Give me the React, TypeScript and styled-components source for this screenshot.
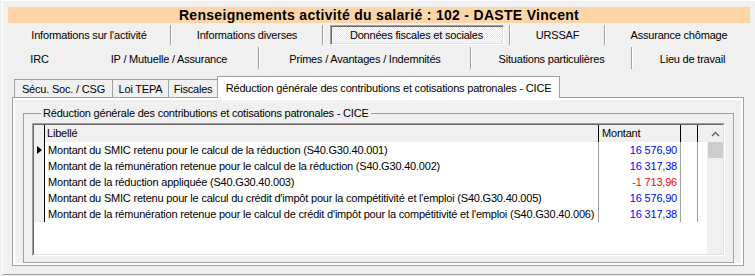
import React from "react";
import styled, { createGlobalStyle } from "styled-components";

interface NavItem {
  label: string;
  width: number;
  selected?: boolean;
  noSep?: boolean;
  indent?: number;
}

interface GridRow {
  label: string;
  amount: string;
  negative?: boolean;
}

const topNav: NavItem[] = [
  { label: "Informations sur l'activité", width: 162 },
  { label: "Informations diverses", width: 150 },
  { label: "Données fiscales et sociales", width: 185, selected: true },
  { label: "URSSAF", width: 93 },
  { label: "Assurance chômage", width: 146 },
];

const bottomNav: NavItem[] = [
  { label: "IRC", width: 63 },
  { label: "IP / Mutuelle / Assurance", width: 187, noSep: true, indent: 9 },
  { label: "Primes / Avantages / Indemnités", width: 210 },
  { label: "Situations particulières", width: 159 },
  { label: "Lieu de travail", width: 119 },
];

const tabs = [
  { label: "Sécu. Soc. / CSG", width: 99 },
  { label: "Loi TEPA", width: 57 },
  { label: "Fiscales", width: 50 },
  { label: "Réduction générale des contributions et cotisations patronales - CICE", width: 343, active: true },
];

const rows: GridRow[] = [
  { label: "Montant du SMIC retenu pour le calcul de la réduction (S40.G30.40.001)", amount: "16 576,90" },
  { label: "Montant de la rémunération retenue pour le calcul de la réduction (S40.G30.40.002)", amount: "16 317,38" },
  { label: "Montant de la réduction appliquée (S40.G30.40.003)", amount: "-1 713,96", negative: true },
  { label: "Montant du SMIC retenu pour le calcul du crédit d'impôt pour la compétitivité et l'emploi (S40.G30.40.005)", amount: "16 576,90" },
  { label: "Montant de la rémunération retenue pour le calcul de crédit d'impôt pour la compétitivité et l'emploi (S40.G30.40.006)", amount: "16 317,38" },
];

function NavRow({ items, height, sepHeight }: { items: NavItem[]; height: number; sepHeight: number }) {
  return (
    <NavBar height={height}>
      {items.map((item, i) => (
        <React.Fragment key={item.label}>
          {i > 0 && !item.noSep && <Separator height={sepHeight} />}
          <NavCell width={item.width} indent={item.indent || 0}>
            {item.selected ? <NavButton>{item.label}</NavButton> : item.label}
          </NavCell>
        </React.Fragment>
      ))}
    </NavBar>
  );
}

export default function App() {
  return (
    <>
      <GlobalStyle />
      <Frame>
        <TitleBar>Renseignements activité du salarié : 102 - DASTE Vincent</TitleBar>
        <NavRow items={topNav} height={22} sepHeight={20} />
        <NavRow items={bottomNav} height={23} sepHeight={22} />
        <TabStrip>
          {tabs.map((t, i) => (
            <Tab key={t.label} width={t.width} active={!!t.active} first={i === 0}>
              {t.label}
            </Tab>
          ))}
        </TabStrip>
        <Panel>
          <GroupBox>
            <GroupLegend>Réduction générale des contributions et cotisations patronales - CICE</GroupLegend>
            <GridFrame>
              <GridInner>
                <TableArea>
                  <HeaderRow>
                    <IndicatorCell header />
                    <LabelCell header>Libellé</LabelCell>
                    <AmountHead>Montant</AmountHead>
                    <EmptyCell header />
                  </HeaderRow>
                  {rows.map((r, i) => (
                    <DataRow key={r.label}>
                      <IndicatorCell>{i === 0 && <Pointer />}</IndicatorCell>
                      <LabelCell>{r.label}</LabelCell>
                      <AmountCell negative={!!r.negative}>{r.amount}</AmountCell>
                      <EmptyCell />
                    </DataRow>
                  ))}
                </TableArea>
                <ScrollBar>
                  <ScrollButton>
                    <svg width="9" height="6" viewBox="0 0 9 6">
                      <polyline points="1,5 4.5,1.5 8,5" fill="none" stroke="#606060" strokeWidth="1.4" />
                    </svg>
                  </ScrollButton>
                  <ScrollThumb />
                </ScrollBar>
              </GridInner>
            </GridFrame>
          </GroupBox>
        </Panel>
      </Frame>
    </>
  );
}

const GlobalStyle = createGlobalStyle`
  html, body {
    margin: 0;
    padding: 0;
    background: #f0f0f0;
    overflow: hidden;
  }
  body {
    font-family: "Liberation Sans", Arial, sans-serif;
    font-size: 11px;
    letter-spacing: -0.2px;
    color: #000;
  }
  * {
    box-sizing: border-box;
  }
`;

const Frame = styled.div`
  margin-left: 2px;
  width: 760px;
  height: 275px;
  padding: 6px 0 0 5px;
  border-top: 1px solid #fff;
  border-left: 1px solid #fff;
  border-bottom: 1px solid #a0a0a0;
  display: flex;
  flex-direction: column;
`;

const TitleBar = styled.div`
  width: 742px;
  height: 16px;
  background: #fdd5a7;
  font-weight: 700;
  font-size: 14px;
  line-height: 16px;
  letter-spacing: 0.3px;
  text-align: center;
  white-space: nowrap;
`;

const NavBar = styled.div<{ height: number }>`
  display: flex;
  align-items: center;
  height: ${p => p.height}px;
  margin-top: 1px;
`;

const NavCell = styled.div<{ width: number; indent: number }>`
  width: ${p => p.width}px;
  height: 100%;
  padding-left: ${p => p.indent}px;
  display: flex;
  align-items: center;
  justify-content: center;
  white-space: nowrap;
`;

const Separator = styled.div<{ height: number }>`
  width: 2px;
  height: ${p => p.height}px;
  align-self: flex-end;
  margin-bottom: 1px;
  border-left: 1px solid #a0a0a0;
  border-right: 1px solid #fff;
`;

const NavButton = styled.div`
  width: 174px;
  height: 20px;
  border: 1px solid;
  border-color: #a0a0a0 #fff #fff #a0a0a0;
  box-shadow: inset 1px 1px 0 #696969, inset -1px -1px 0 #e3e3e3;
  background: repeating-conic-gradient(#ffffff 0% 25%, #e4e4e4 0% 50%) 0 0 / 2px 2px;
  display: flex;
  align-items: center;
  justify-content: center;
`;

const TabStrip = styled.div`
  display: flex;
  align-items: flex-end;
  height: 27px;
  padding-left: 6px;
`;

const Tab = styled.div<{ width: number; active: boolean; first: boolean }>`
  position: relative;
  z-index: ${p => (p.active ? 1 : 0)};
  width: ${p => p.width}px;
  height: ${p => (p.active ? 22 : 18)}px;
  margin-left: ${p => (p.first ? 0 : -1)}px;
  margin-bottom: ${p => (p.active ? -1 : 0)}px;
  border: 1px solid #a0a0a0;
  border-bottom: none;
  background: ${p => (p.active ? "#fff" : "#f0f0f0")};
  display: flex;
  align-items: center;
  justify-content: center;
  white-space: nowrap;
  padding-top: ${p => (p.active ? 0 : 1)}px;
`;

const Panel = styled.div`
  margin-left: 4px;
  width: 732px;
  height: 169px;
  border: 1px solid #a0a0a0;
  background: #f0f0f0;
  box-shadow: inset 0 0 0 2px #fff;
  display: flex;
  flex-direction: column;
`;

const GroupBox = styled.fieldset`
  margin: 9px 9px 0 10px;
  padding: 0 8px 6px 8px;
  min-width: 0;
  border: 1px solid #a0a0a0;
`;

const GroupLegend = styled.legend`
  margin-left: 9px;
  padding: 0 2px;
  line-height: 13px;
  white-space: nowrap;
`;

const GridFrame = styled.div`
  margin-top: 3px;
  height: 133px;
  border: 1px solid;
  border-color: #a0a0a0 #fff #fff #a0a0a0;
`;

const GridInner = styled.div`
  height: 100%;
  border: 1px solid;
  border-color: #696969 #e3e3e3 #e3e3e3 #696969;
  display: flex;
  background: #fff;
`;

const TableArea = styled.div`
  flex: 1;
  display: flex;
  flex-direction: column;
  background: #fff;
`;

const HeaderRow = styled.div`
  display: flex;
  height: 17px;
  background: #f0f0f0;
`;

const DataRow = styled.div`
  display: flex;
  height: 16px;
`;

const IndicatorCell = styled.div<{ header?: boolean }>`
  width: 11px;
  border-right: 1px solid #000;
  background: #f0f0f0;
  display: flex;
  align-items: center;
  padding-left: 3px;
`;

const Pointer = styled.div`
  width: 0;
  height: 0;
  border-left: 5px solid #000;
  border-top: 4px solid transparent;
  border-bottom: 4px solid transparent;
`;

const LabelCell = styled.div<{ header?: boolean }>`
  width: 554px;
  border-right: 1px solid ${p => (p.header ? "#000" : "#a0a0a0")};
  padding-left: ${p => (p.header ? 2 : 3)}px;
  line-height: ${p => (p.header ? 17 : 16)}px;
  white-space: nowrap;
  overflow: hidden;
`;

const AmountHead = styled.div`
  width: 82px;
  border-right: 1px solid #000;
  padding-left: 3px;
  line-height: 17px;
`;

const AmountCell = styled.div<{ negative: boolean }>`
  width: 82px;
  border-right: 1px solid #a0a0a0;
  padding-right: 3px;
  line-height: 16px;
  text-align: right;
  color: ${p => (p.negative ? "#ff0000" : "#0000ff")};
`;

const EmptyCell = styled.div<{ header?: boolean }>`
  width: 17px;
  border-right: 1px solid ${p => (p.header ? "#000" : "#a0a0a0")};
`;

const ScrollBar = styled.div`
  width: 16px;
  background: #f0f0f0;
  display: flex;
  flex-direction: column;
`;

const ScrollButton = styled.div`
  height: 17px;
  display: flex;
  align-items: center;
  justify-content: center;
`;

const ScrollThumb = styled.div`
  height: 16px;
  margin-left: 1px;
  background: #cdcdcd;
`;
